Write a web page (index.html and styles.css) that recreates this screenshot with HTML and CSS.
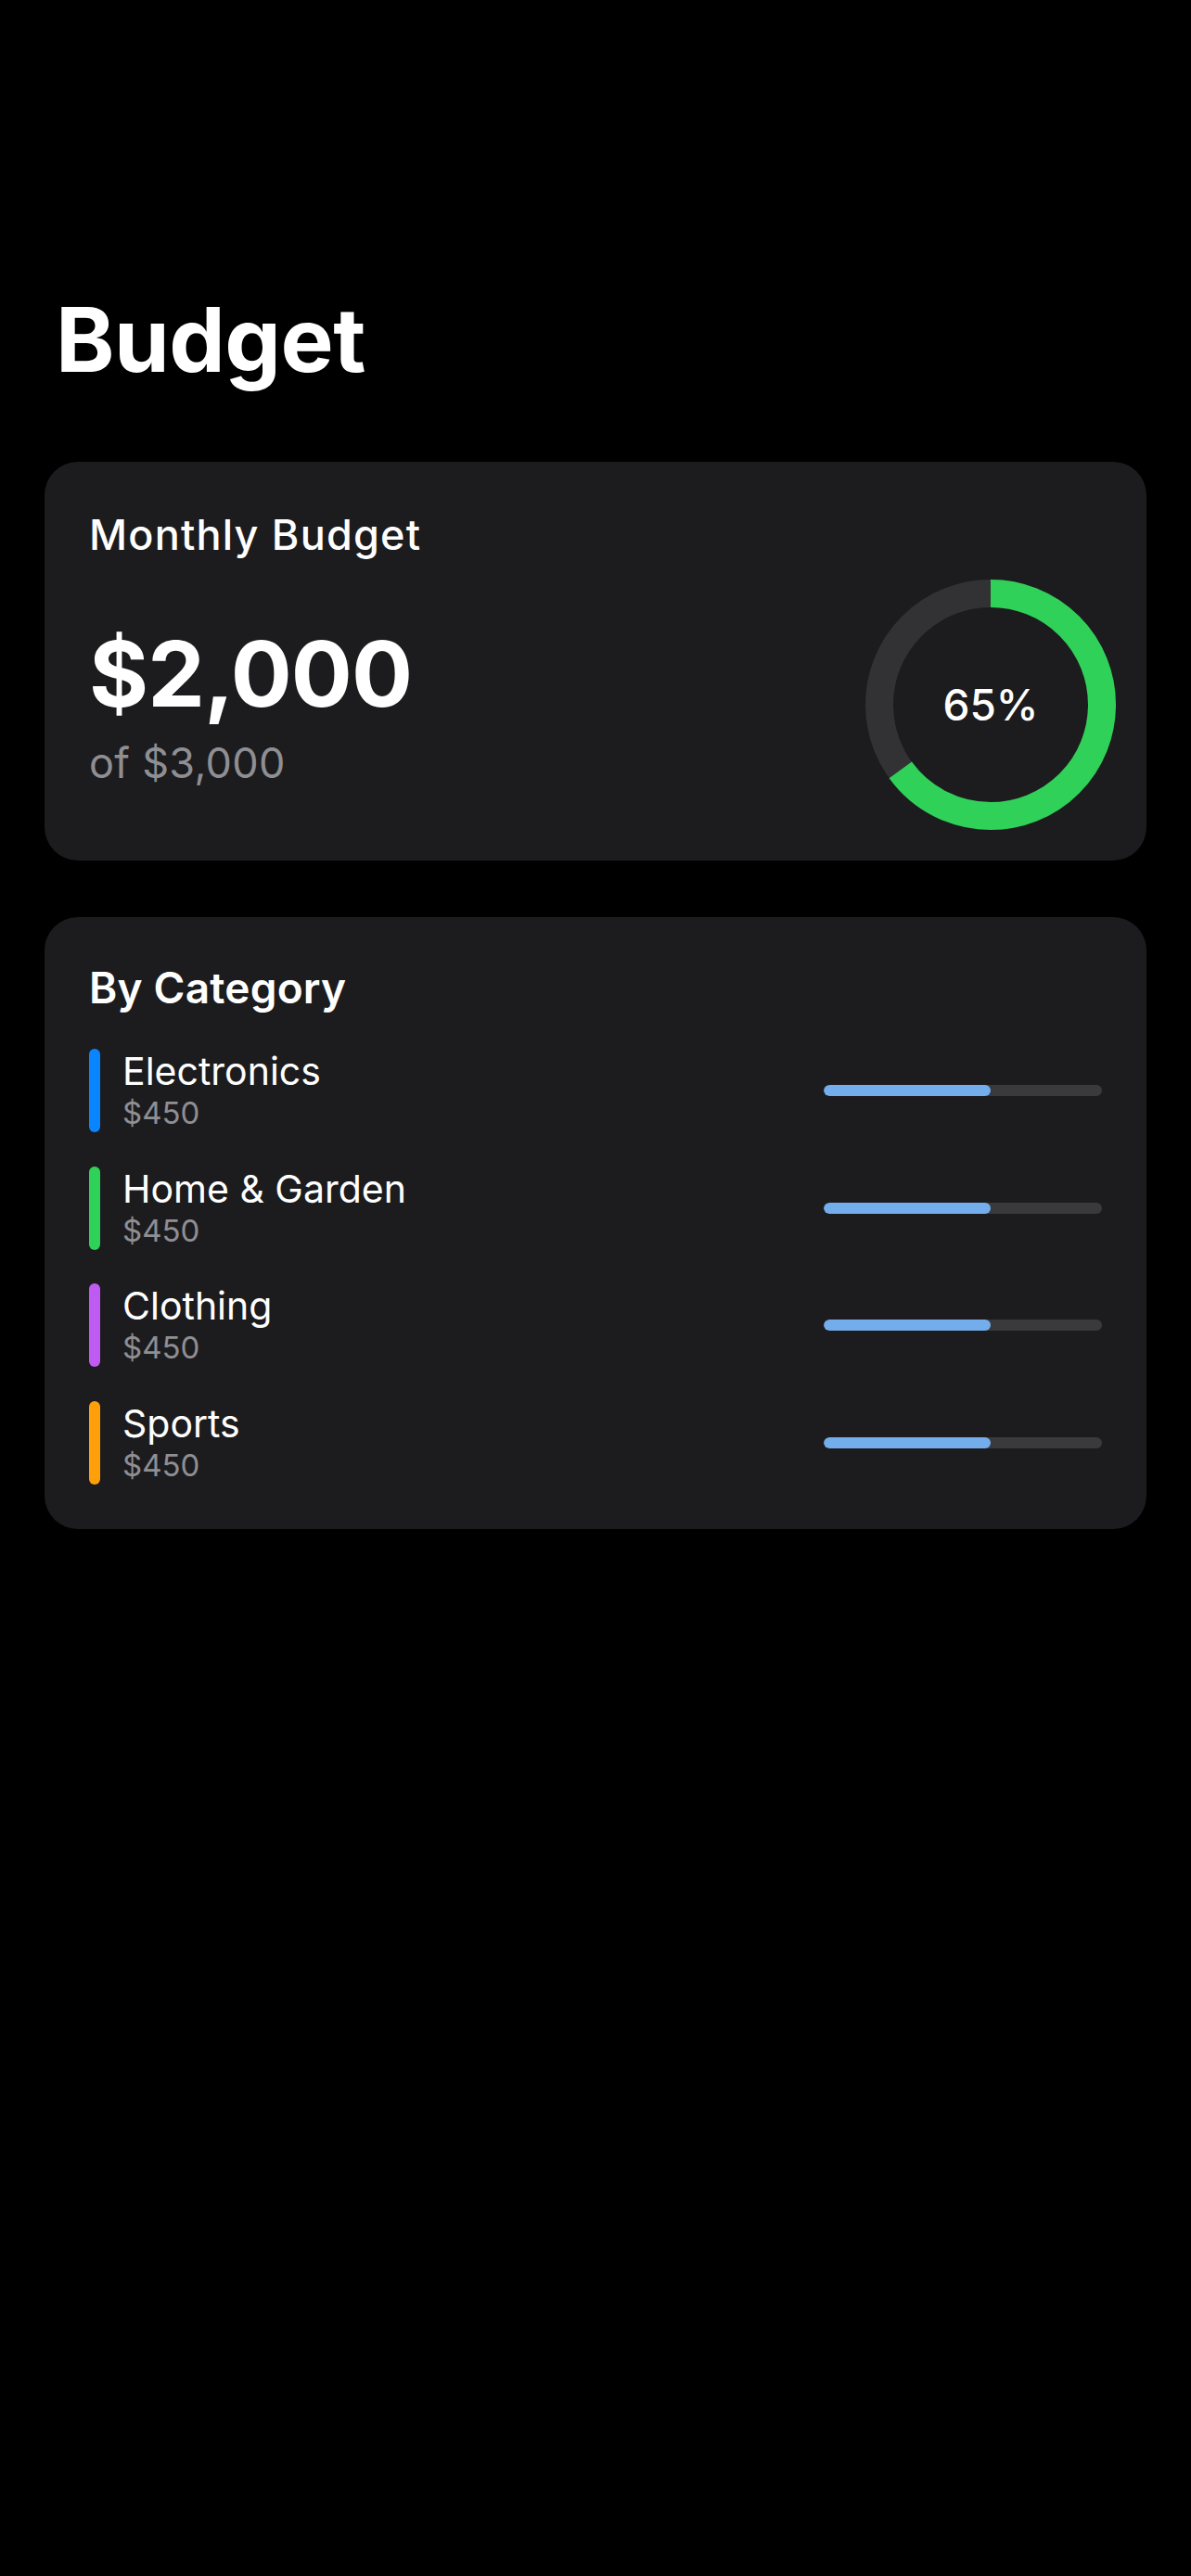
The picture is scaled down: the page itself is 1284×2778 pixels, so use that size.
FILE: index.html
```html
<!DOCTYPE html>
<html lang="en">
<head>
<meta charset="utf-8">
<title>Budget</title>
<link rel="stylesheet" href="styles.css">
</head>
<body>
<main class="screen">
  <h1 class="page-title">Budget</h1>

  <section class="card summary">
    <h2 class="card-title">Monthly Budget</h2>
    <div class="summary-row">
      <div class="amounts">
        <div class="spent">$2,000</div>
        <div class="total">of $3,000</div>
      </div>
      <div class="ring">
        <svg class="ring-svg" width="270" height="270" viewBox="0 0 270 270">
          <circle cx="135" cy="135" r="120" fill="none" stroke="#323234" stroke-width="30"/>
          <circle cx="135" cy="135" r="120" fill="none" stroke="#30d158" stroke-width="30"
                  stroke-dasharray="490.09 753.98" transform="rotate(-90 135 135)"/>
        </svg>
        <div class="ring-label">65%</div>
      </div>
    </div>
  </section>

  <section class="card categories">
    <h2 class="card-title strong">By Category</h2>
    <ul class="cat-list">
      <li class="cat-row">
        <span class="cat-bar blue"></span>
        <div class="cat-text">
          <div class="cat-name">Electronics</div>
          <div class="cat-amount">$450</div>
        </div>
        <div class="progress"><div class="progress-fill" style="width:60%"></div></div>
      </li>
      <li class="cat-row">
        <span class="cat-bar green"></span>
        <div class="cat-text">
          <div class="cat-name">Home &amp; Garden</div>
          <div class="cat-amount">$450</div>
        </div>
        <div class="progress"><div class="progress-fill" style="width:60%"></div></div>
      </li>
      <li class="cat-row">
        <span class="cat-bar purple"></span>
        <div class="cat-text">
          <div class="cat-name">Clothing</div>
          <div class="cat-amount">$450</div>
        </div>
        <div class="progress"><div class="progress-fill" style="width:60%"></div></div>
      </li>
      <li class="cat-row">
        <span class="cat-bar orange"></span>
        <div class="cat-text">
          <div class="cat-name">Sports</div>
          <div class="cat-amount">$450</div>
        </div>
        <div class="progress"><div class="progress-fill" style="width:60%"></div></div>
      </li>
    </ul>
  </section>
</main>
</body>
</html>
```
FILE: styles.css
```css
* { box-sizing: border-box; }

html, body {
  margin: 0;
  padding: 0;
  background: #000;
}

body {
  font-family: Inter, "Noto Sans", "Liberation Sans", sans-serif;
  color: #fff;
  min-height: 2778px;
}

.screen {
  padding: 308px 48px 0;
  display: flex;
  flex-direction: column;
}

.page-title {
  margin: 0 0 74px 12px;
  font-size: 96px;
  line-height: 116px;
  font-weight: 700;
  letter-spacing: -0.5px;
}

.card {
  background: #1c1c1e;
  border-radius: 36px;
  padding: 48px;
}

.card + .card {
  margin-top: 61px;
}

.card-title {
  margin: 0;
  font-size: 45px;
  line-height: 61px;
  font-weight: 500;
  letter-spacing: 1.2px;
}

.card-title.strong {
  font-size: 46px;
  line-height: 57px;
  font-weight: 600;
  letter-spacing: 0.2px;
}

.summary-row {
  margin-top: 33px;
  display: flex;
  justify-content: space-between;
  align-items: flex-start;
  height: 240px;
}

.amounts {
  padding-top: 37px;
  display: flex;
  flex-direction: column;
}

.spent {
  font-size: 98px;
  line-height: 100px;
  font-weight: 700;
  letter-spacing: -1px;
}

.total {
  margin-top: 18px;
  font-size: 45px;
  line-height: 56px;
  font-weight: 400;
  color: #8e8e93;
  letter-spacing: 0.3px;
}

.ring {
  position: relative;
  width: 270px;
  height: 270px;
  margin: -15px -15px -15px 0;
  flex-shrink: 0;
}

.ring-svg {
  display: block;
}

.ring-label {
  position: absolute;
  inset: 0;
  display: flex;
  align-items: center;
  justify-content: center;
  font-size: 46px;
  font-weight: 500;
}

.cat-list {
  list-style: none;
  margin: 37px 0 0;
  padding: 0;
  display: flex;
  flex-direction: column;
  gap: 36.7px;
}

.cat-row {
  display: flex;
  align-items: center;
  height: 90px;
}

.cat-bar {
  width: 12px;
  height: 90px;
  border-radius: 6px;
  flex-shrink: 0;
}

.cat-bar.blue { background: #0a84ff; }
.cat-bar.green { background: #30d158; }
.cat-bar.purple { background: #bf5af2; }
.cat-bar.orange { background: #ff9f0a; }

.cat-text {
  margin-left: 24px;
  flex: 1;
  display: flex;
  flex-direction: column;
}

.cat-name {
  font-size: 41px;
  line-height: 48px;
  font-weight: 400;
}

.cat-amount {
  font-size: 33px;
  line-height: 42px;
  color: #8e8e93;
}

.progress {
  width: 300px;
  height: 12px;
  border-radius: 6px;
  background: #3a3a3c;
  overflow: hidden;
  flex-shrink: 0;
}

.progress-fill {
  height: 100%;
  border-radius: 6px;
  background: #74adeb;
}
```
